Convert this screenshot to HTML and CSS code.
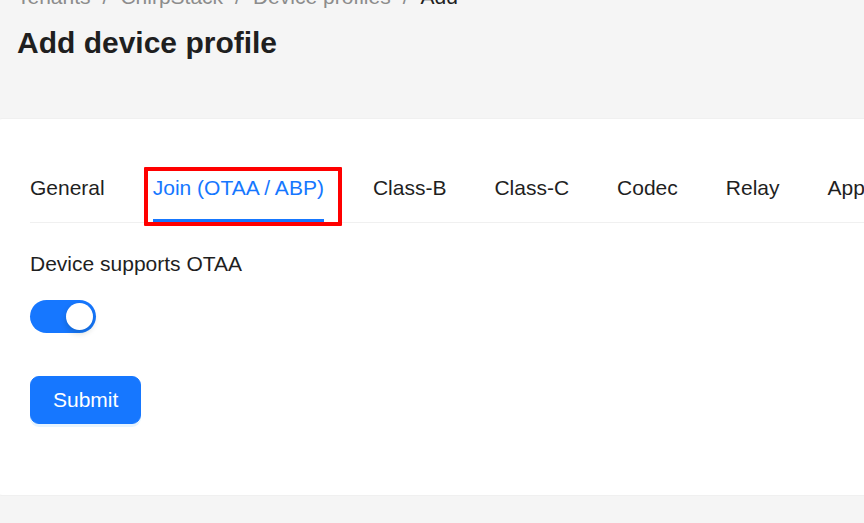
FILE: index.html
```html
<!DOCTYPE html>
<html lang="en">
<head>
<meta charset="utf-8">
<title>Add device profile</title>
<link rel="stylesheet" href="styles.css">
</head>
<body>
<div class="page">
  <header class="page-header">
    <nav class="breadcrumb">
      <span class="crumb">Tenants</span><span class="sep">/</span>
      <span class="crumb">ChirpStack</span><span class="sep">/</span>
      <span class="crumb">Device profiles</span><span class="sep">/</span>
      <span class="crumb current">Add</span>
    </nav>
    <h1 class="title">Add device profile</h1>
  </header>
  <section class="card">
    <div class="tabs">
      <div class="tab">General</div>
      <div class="tab active">Join (OTAA / ABP)<span class="ink"></span><span class="highlight"></span></div>
      <div class="tab">Class-B</div>
      <div class="tab">Class-C</div>
      <div class="tab">Codec</div>
      <div class="tab">Relay</div>
      <div class="tab">Application layer</div>
    </div>
    <form class="form">
      <div class="form-item">
        <label class="label">Device supports OTAA</label>
        <div class="control">
          <span class="switch"><span class="knob"></span></span>
        </div>
      </div>
      <div class="form-item">
        <button type="button" class="btn-primary">Submit</button>
      </div>
    </form>
  </section>
</div>
</body>
</html>
```

FILE: styles.css
```css
html, body {
  margin: 0;
  padding: 0;
  background: #f5f5f5;
  overflow: hidden;
  height: 100%;
}
body {
  font-family: "Liberation Sans", Arial, sans-serif;
  color: #1f1f1f;
}
.page {
  margin-top: -20px;
}
.page-header {
  padding: 0 0 51px 17px;
}
.breadcrumb {
  display: flex;
  font-size: 21px;
  line-height: 33px;
  color: #8c8c8c;
  white-space: nowrap;
}
.sep {
  margin: 0 12px;
}
.crumb.current {
  color: #1f1f1f;
}
.title {
  margin: 6px 0 0;
  font-size: 30px;
  line-height: 48px;
  font-weight: 700;
  color: #1f1f1f;
}
.card {
  background: #fff;
  border: 1px solid #f0f0f0;
  border-radius: 12px;
  margin-left: -10px;
  margin-right: -60px;
  padding: 34px 40px 35px 39px;
}
.tabs {
  display: flex;
  gap: 48px;
  border-bottom: 1px solid #f0f0f0;
  margin-bottom: 24px;
  white-space: nowrap;
}
.tab {
  position: relative;
  padding: 18px 0;
  font-size: 21px;
  line-height: 33px;
  color: #1f1f1f;
}
.tab.active {
  color: #1677ff;
  margin-right: 1px;
}
.ink {
  position: absolute;
  left: 0;
  right: 0;
  bottom: 0;
  height: 3px;
  background: #1677ff;
}
.highlight {
  position: absolute;
  left: -9px;
  top: 14px;
  width: 190px;
  height: 51px;
  border: 4px solid #ff0000;
  border-radius: 1px;
}
.form-item {
  margin-bottom: 36px;
}
.label {
  display: block;
  font-size: 21px;
  line-height: 33px;
  padding-bottom: 12px;
  color: #1f1f1f;
}
.control {
  height: 48px;
  display: flex;
  align-items: center;
}
.switch {
  position: relative;
  display: inline-block;
  width: 66px;
  height: 33px;
  border-radius: 17px;
  background: #1677ff;
}
.knob {
  position: absolute;
  top: 3px;
  right: 3px;
  width: 27px;
  height: 27px;
  border-radius: 50%;
  background: #fff;
  box-shadow: 0 3px 6px rgba(0, 35, 11, 0.2);
}
.btn-primary {
  display: inline-block;
  height: 48px;
  padding: 0 22px;
  font-family: "Liberation Sans", Arial, sans-serif;
  font-size: 21px;
  line-height: 46px;
  color: #fff;
  background: #1677ff;
  border: 1px solid #1677ff;
  border-radius: 9px;
  box-shadow: 0 3px 0 rgba(5, 145, 255, 0.1);
  cursor: pointer;
}
```
